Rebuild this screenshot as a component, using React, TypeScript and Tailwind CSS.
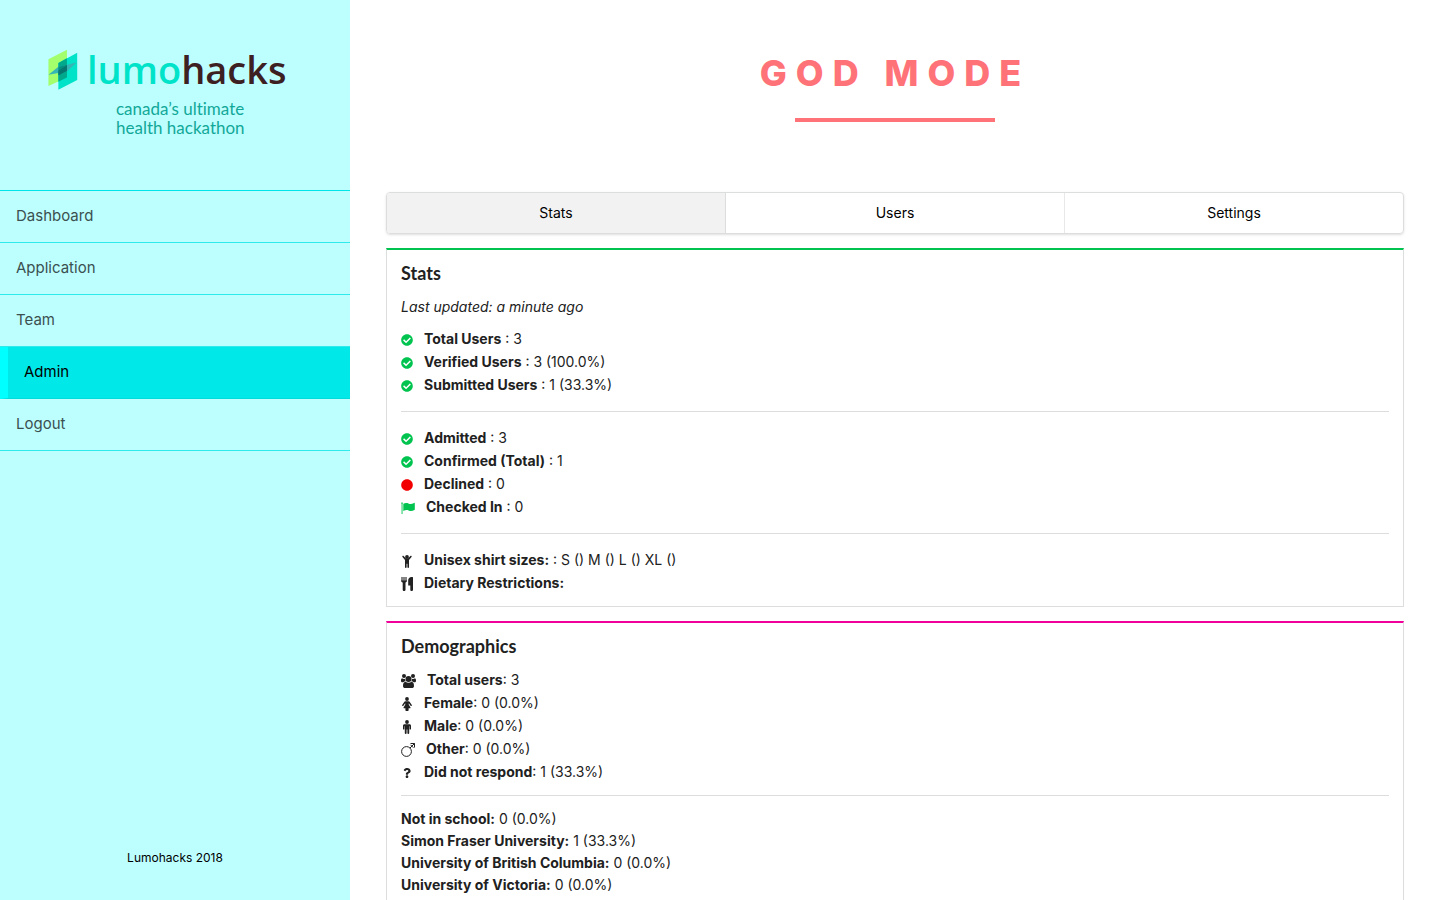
import type { ReactNode } from 'react';
import { FaCheckCircle, FaCircle, FaQuestion } from 'react-icons/fa';

function Logo() {
  return (
    <a href="#home" aria-label="lumohacks" className="mx-auto block w-[254px]">
      <span className="flex items-center gap-[9px]">
        <svg viewBox="0 0 90 124" className="h-[41px] w-[30px] shrink-0" aria-hidden="true">
          <polygon points="1,31 57,2 57,86 1,112" fill="#a3ff6b" />
          <polygon points="31,42 88,11 88,94 31,123" fill="#00e3c8" />
          <polygon points="31,42 57,28 57,86 31,99" fill="#00a88c" />
          <polygon points="1,78 31,54 86,41 57,68" fill="#35b5b5" />
          <polygon points="31,54 57,48 57,68 31,73" fill="#00907f" />
          <polygon points="31,66 57,49 57,66 31,80" fill="#06756f" />
        </svg>
        <span className="font-['Open_Sans'] text-[38px] leading-[44px] font-semibold text-[#3d2021]">
          <span className="text-[#00e3c8]">lumo</span>hacks
        </span>
      </span>
      <span className="mt-2 block pl-[68px] font-['Lato'] text-[17px] leading-[19px] text-[#12a898] [font-variant-ligatures:none]">
        canada’s ultimate
        <br />
        health hackathon
      </span>
    </a>
  );
}

const navItems = ['Dashboard', 'Application', 'Team', 'Admin', 'Logout'];

function Sidebar() {
  return (
    <aside className="sticky top-0 flex h-screen w-[350px] shrink-0 flex-col bg-[#bdffff]">
      <div className="h-[190px] pt-[47px]">
        <Logo />
      </div>
      <nav className="border-t border-[#00e6e6]">
        {navItems.map((item) => (
          <a
            key={item}
            href={`#${item.toLowerCase()}`}
            aria-current={item === 'Admin' ? 'page' : undefined}
            className={
              item === 'Admin'
                ? 'flex h-[52px] items-center border-b border-l-8 border-b-[#00dcdc] border-l-[#00ffff] bg-[#00e8e8] pb-[2px] pl-4 text-[15px] text-black'
                : 'flex h-[52px] items-center border-b border-[#2eeaea] pb-[2px] pl-4 text-[15px] text-[#3b5050]'
            }
          >
            {item}
          </a>
        ))}
      </nav>
      <p className="mt-auto mb-[34px] text-center text-xs text-black">Lumohacks 2018</p>
    </aside>
  );
}

function FlagIcon() {
  return (
    <svg viewBox="0 0 14 12" className="h-3 w-[14px]" fill="currentColor" aria-hidden="true">
      <path d="M1 0.3a1 1 0 0 1 .5 1.7V12H.6V2A1 1 0 0 1 1 .3z" />
      <path d="M2.3 1.8C4 .8 5.600.6 7.400 1.400 9.300 2.300 11 2 13 .9c.4-.2.8 0 .8.400v6.200c0 .3-.1.400-.400.600-2 1.100-3.900 1.300-5.800.400C5.900 7.700 4.400 7.900 2.300 9z" />
    </svg>
  );
}

function ChildIcon() {
  return (
    <svg viewBox="0 0 12 14" className="h-[14px] w-3" fill="currentColor" aria-hidden="true">
      <circle cx="6" cy="3" r="1.900" />
      <path d="M1.500 1.900c.3-.3.8-.3 1.100 0L5 4.500h2l2.400-2.600c.3-.3.8-.3 1.100 0s.3.800 0 1.100L8 5.900V13c0 .5-.3.900-.8.900s-.8-.400-.8-.9V9.800h-.8V13c0 .5-.3.900-.8.900S4 13.500 4 13V5.900L1.500 3c-.3-.3-.3-.8 0-1.100z" />
    </svg>
  );
}

function FoodIcon() {
  return (
    <svg viewBox="0 0 12 14" className="h-[14px] w-3" fill="currentColor" aria-hidden="true">
      <path d="M0 0h6v4H0z" opacity=".55" />
      <path d="M0 3.500h6c0 1-.6 1.700-1.500 2V12.700c0 .7-.6 1.300-1.400 1.300s-1.400-.6-1.400-1.300V5.500C.7 5.200 0 4.500 0 3.500z" />
      <path d="M12 .5v12.200c0 .7-.6 1.300-1.400 1.300s-1.300-.6-1.300-1.300V8.500H7.200V3.300C7.200 1.500 8.700 0 10.500 0h1c.3 0 .5.200.5.500z" />
    </svg>
  );
}

function GroupIcon() {
  return (
    <svg viewBox="0 0 15 14" className="h-[14px] w-[15px]" fill="currentColor" aria-hidden="true">
      <circle cx="3" cy="2" r="2" />
      <circle cx="12" cy="2" r="2" />
      <circle cx="7.500" cy="5" r="3" />
      <path d="M1 4.300c.6.500 1.300.7 2 .7.300 0 .7 0 1-.2 0 .9.200 1.700.7 2.400-1 0-1.900.4-2.500 1.100H1.500C.6 8.300 0 7.800 0 6.900c0-1 .1-2.300 1-2.600zM14 4.300c-.6.500-1.300.7-2 .7-.3 0-.7 0-1-.2 0 .9-.2 1.700-.7 2.400 1 0 1.900.4 2.500 1.100h.7c.9 0 1.500-.5 1.500-1.400 0-1-.1-2.300-1-2.600z" />
      <path d="M4.500 7.700c.9.700 1.900 1.100 3 1.100s2.100-.4 3-1.100c1.900.1 2.500 2.100 2.500 4.200 0 1.300-.9 2.100-2.100 2.100H4.100C2.900 14 2 13.200 2 11.900c0-2.100.6-4.100 2.500-4.200z" />
    </svg>
  );
}

function FemaleIcon() {
  return (
    <svg viewBox="0 0 12 14" className="h-[14px] w-3" fill="currentColor" aria-hidden="true">
      <circle cx="6" cy="2" r="1.900" />
      <path d="M4.500 4.200h3c.6 0 1 .2 1.300.7l2 3c.2.300.1.800-.2 1s-.8.100-1-.2L8 6.500h-.3v1l1.800 3c.2.300 0 .7-.4.700H7.600v2c0 .5-.3.800-.8.800H5.200c-.5 0-.8-.3-.8-.8v-2H2.900c-.4 0-.6-.4-.4-.7l1.800-3v-1H4L2.400 8.700c-.2.300-.7.400-1 .2s-.4-.7-.2-1l2-3c.3-.5.700-.7 1.300-.7z" />
    </svg>
  );
}

function MaleIcon() {
  return (
    <svg viewBox="0 0 12 14" className="h-[14px] w-3" fill="currentColor" aria-hidden="true">
      <circle cx="6" cy="2" r="1.900" />
      <path d="M3.500 4.200h5c.9 0 1.500.6 1.500 1.500v3.200c0 .4-.3.700-.7.700s-.7-.3-.7-.7V6.300h-.4v6.900c0 .5-.4.800-.9.800s-.9-.3-.9-.8V9.400h-.8v3.800c0 .5-.4.800-.9.800s-.9-.3-.9-.8V6.300h-.4v2.600c0 .4-.3.700-.7.700S2 9.300 2 8.900V5.700c0-.9.600-1.500 1.500-1.500z" />
    </svg>
  );
}

function OtherGenderIcon() {
  return (
    <svg viewBox="0 0 14 14" className="h-[14px] w-[14px]" fill="none" stroke="currentColor" aria-hidden="true">
      <circle cx="5.500" cy="8.500" r="4.900" />
      <path d="M9 5l4.500-4.500M9.500.5h4v4M9.500 1.800l2.900 2.900" />
    </svg>
  );
}

const check = <FaCheckCircle size={12} className="text-[#00c44f]" aria-hidden="true" />;

function StatRow({ icon, label, value }: { icon: ReactNode; label: string; value: string }) {
  return (
    <li className="flex h-[23px] items-center gap-[11px]">
      <span className="flex shrink-0 pt-[2px]">{icon}</span>
      <span>
        <strong className="font-bold">{label}</strong>
        {value}
      </span>
    </li>
  );
}

function Card({ title, accent, children }: { title: string; accent: string; children: ReactNode }) {
  return (
    <section className={`mt-[14px] border border-t-2 border-[#dcdddd] px-[14px] py-3 ${accent}`}>
      <h2 className="font-['Lato'] text-lg leading-[22px] font-bold">{title}</h2>
      {children}
    </section>
  );
}

const tabs = ['Stats', 'Users', 'Settings'];

const schools = [
  ['Not in school:', '0 (0.0%)'],
  ['Simon Fraser University:', '1 (33.3%)'],
  ['University of British Columbia:', '0 (0.0%)'],
  ['University of Victoria:', '0 (0.0%)'],
];

export default function App() {
  return (
    <div className="flex min-h-screen bg-white font-['Inter',sans-serif] text-sm text-[#212121]">
      <Sidebar />
      <main className="min-w-0 flex-1 px-9">
        <header className="flex h-[192px] flex-col items-center pt-[50px]">
          <h1 className="text-4xl leading-[46px] font-extrabold tracking-[0.25em] text-[#ff7378]">GOD MODE</h1>
          <div className="mt-[22px] h-1 w-[200px] bg-[#ff7378]" />
        </header>

        <div role="tablist" className="flex h-[42px] overflow-hidden rounded border border-[#dcdddd] shadow-sm">
          {tabs.map((tab) => (
            <button
              key={tab}
              type="button"
              role="tab"
              aria-selected={tab === 'Stats'}
              className={
                tab === 'Stats'
                  ? 'flex-1 border-r border-[#dcdddd] bg-[#f2f2f2] text-black'
                  : 'flex-1 border-r border-[#e8e8e8] text-black last:border-r-0'
              }
            >
              {tab}
            </button>
          ))}
        </div>

        <Card title="Stats" accent="border-t-[#00c44f]">
          <p className="mt-[13px] leading-5 italic">Last updated: a minute ago</p>
          <ul className="mt-[10px]">
            <StatRow icon={check} label="Total Users" value=" : 3" />
            <StatRow icon={check} label="Verified Users" value=" : 3 (100.0%)" />
            <StatRow icon={check} label="Submitted Users" value=" : 1 (33.3%)" />
          </ul>
          <hr className="mt-[15px] mb-[14px] border-[#dcdddd]" />
          <ul>
            <StatRow icon={check} label="Admitted" value=" : 3" />
            <StatRow icon={check} label="Confirmed (Total)" value=" : 1" />
            <StatRow
              icon={<FaCircle size={12} className="text-[#f20000]" aria-hidden="true" />}
              label="Declined"
              value=" : 0"
            />
            <StatRow
              icon={
                <span className="text-[#00c44f]">
                  <FlagIcon />
                </span>
              }
              label="Checked In"
              value=" : 0"
            />
          </ul>
          <hr className="mt-[15px] mb-[14px] border-[#dcdddd]" />
          <ul>
            <StatRow icon={<ChildIcon />} label="Unisex shirt sizes:" value=" : S () M () L () XL ()" />
            <StatRow icon={<FoodIcon />} label="Dietary Restrictions:" value="" />
          </ul>
        </Card>

        <Card title="Demographics" accent="border-t-[#f2009b]">
          <ul className="mt-[11px]">
            <StatRow icon={<GroupIcon />} label="Total users" value=": 3" />
            <StatRow icon={<FemaleIcon />} label="Female" value=": 0 (0.0%)" />
            <StatRow icon={<MaleIcon />} label="Male" value=": 0 (0.0%)" />
            <StatRow icon={<OtherGenderIcon />} label="Other" value=": 0 (0.0%)" />
            <StatRow
              icon={<FaQuestion className="h-[10px] w-3" aria-hidden="true" />}
              label="Did not respond"
              value=": 1 (33.3%)"
            />
          </ul>
          <hr className="my-3 border-[#dcdddd]" />
          <ul className="leading-[22px]">
            {schools.map(([name, count]) => (
              <li key={name}>
                <strong className="font-bold">{name}</strong> {count}
              </li>
            ))}
          </ul>
        </Card>
      </main>
    </div>
  );
}
